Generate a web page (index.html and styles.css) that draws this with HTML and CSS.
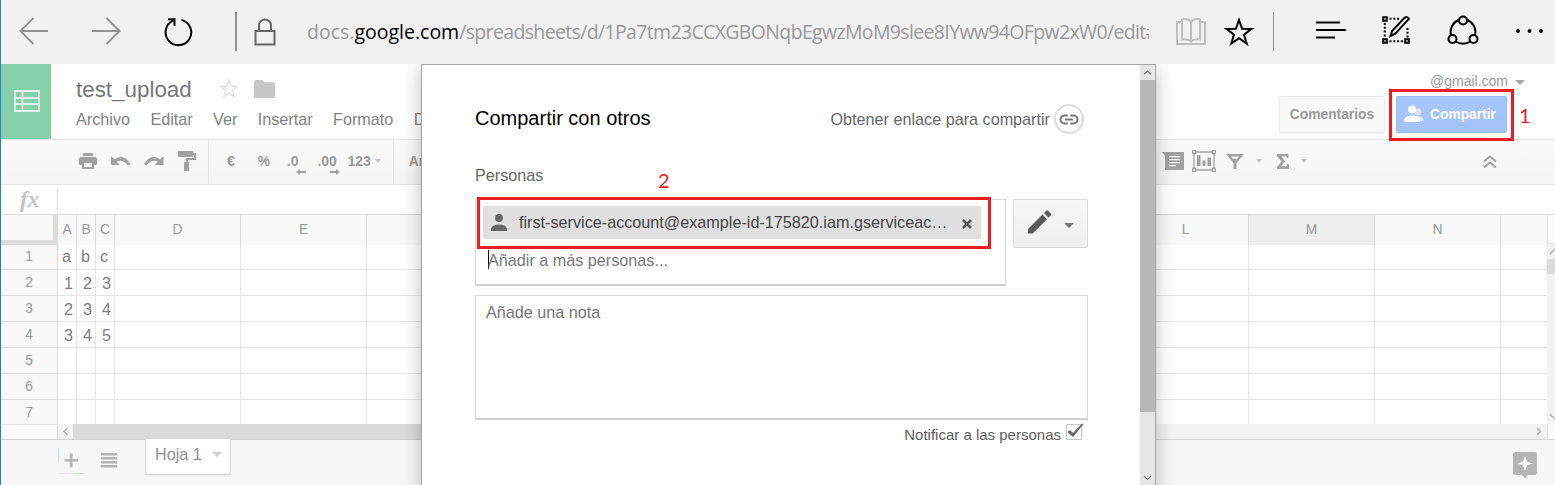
FILE: index.html
```html
<!DOCTYPE html>
<html lang="es">
<head>
<meta charset="utf-8">
<title>test_upload</title>
<link rel="stylesheet" href="styles.css">
</head>
<body>
<div class="window">
  <div class="browser-bar">
    <svg class="nav-back" width="30" height="28" viewBox="0 0 30 28"><path d="M29 14H2M14.500 1L1.500 14l13 13"/></svg>
    <svg class="nav-forward" width="30" height="28" viewBox="0 0 30 28"><path d="M1 14h27M15.500 1l13 13-13 13"/></svg>
    <svg class="nav-reload" width="30" height="30" viewBox="0 0 30 30"><path d="M17.500 2.900A12.800 12.800 0 1 1 9 3.700M4 2.300h6.500v6.500" /></svg>
    <span class="divider divider-left"></span>
    <svg class="lock" width="23" height="28" viewBox="0 0 23 28"><path d="M1.500 13h19v13.500h-19zM5 13V7.500a6 6 0 0 1 12 0V13"/></svg>
    <div class="url">docs.<b>google.com</b><span>/spreadsheets/d/1Pa7tm23CCXGBONqbEgwzMoM9slee8IYww94OFpw2xW0/edit#</span></div>
    <svg class="book" width="30" height="28" viewBox="0 0 30 28"><path d="M5 4H1v22h28V4h-4M15 4v19M15 4q-3-4-9-2.500v20q6-1 9 2q3-3 9-2v-20Q18 0 15 4"/></svg>
    <svg class="favorite" width="30" height="30" viewBox="0 0 30 30"><path d="M15 3l3.100 8.800 9.400.1-7.500 5.700 2.700 9L15 21.300l-7.700 5.300 2.700-9L2.500 11.900l9.400-.1z"/></svg>
    <span class="divider divider-right"></span>
    <svg class="hub" width="30" height="20" viewBox="0 0 30 20"><path d="M0 2.500h24M0 10h30M0 17.500h19"/></svg>
    <svg class="note" width="28" height="28" viewBox="0 0 28 28"><path d="M1.200 1.200h3.600v3.600H1.200zM1.200 23.200h3.600v3.600H1.200zM23.200 23.200h3.600v3.600h-3.600z"/><path stroke-dasharray="2 1.800" d="M7.500 2.800H18M2.800 7v15M25.500 12v10M7.500 25.300H22"/><path d="M22.500 1.800q3-1.800 4.400 1L13.500 17.500 8.500 20l1.500-5z"/></svg>
    <svg class="share-web" width="32" height="32" viewBox="0 0 32 32"><path d="M11.500 5A13 13 0 0 0 4 20M20.500 5A13 13 0 0 1 28 20M8.500 26.500q7.500 4.500 15 0"/><circle cx="16" cy="5.500" r="4"/><circle cx="5.500" cy="24" r="4"/><circle cx="26.500" cy="24" r="4"/></svg>
    <svg class="more" width="28" height="4" viewBox="0 0 28 4"><circle cx="2" cy="2" r="1.900"/><circle cx="13.500" cy="2" r="1.900"/><circle cx="25" cy="2" r="1.900"/></svg>
  </div>

  <header class="doc-header">
    <div class="sheets-logo"><svg width="26" height="22" viewBox="0 0 26 22"><path d="M1 1h24v20H1zM1 8h24M1 14h24M8.500 1v20"/></svg></div>
    <div class="doc-info">
      <div class="doc-title">test_upload
        <svg class="doc-star" width="20" height="20" viewBox="0 0 20 20"><path d="M10 1.500l2.300 6h6.200l-5 3.900 1.800 6.400L10 14.200l-5.300 3.600 1.800-6.400-5-3.900h6.200z"/></svg>
        <svg class="doc-folder" width="21" height="18" viewBox="0 0 21 18"><path d="M0 2q0-2 2-2h6l2 2.300h9.500q1.500 0 1.500 1.500V18H0z"/></svg>
      </div>
      <nav class="menu"><span>Archivo</span><span>Editar</span><span>Ver</span><span>Insertar</span><span>Formato</span><span>D</span></nav>
    </div>
    <div class="account">
      <div class="email">@gmail.com <i class="caret"></i></div>
      <div class="actions">
        <div class="btn btn-comments">Comentarios</div>
        <div class="btn btn-share"><svg width="21" height="18" viewBox="0 0 21 18"><g opacity=".55"><circle cx="14" cy="7" r="3.500"/><path d="M12 11q8 0 8 5h-8z"/></g><circle cx="8" cy="4.500" r="4"/><path d="M0 17v-2q1-4.500 8-4.500t8 4.500v2z"/></svg>Compartir</div>
      </div>
    </div>
  </header>

  <div class="toolbar">
    <svg class="t-print" width="18" height="16" viewBox="0 0 18 16"><path d="M4 0h10v3H4zM2 4h14q2 0 2 2v6h-3v4H3v-4H0V6q0-2 2-2zm3 6v4h8v-4z" fill-rule="evenodd"/></svg>
    <svg class="t-undo" width="20" height="11" viewBox="0 0 20 11"><path d="M0 0v9h9L5.700 5.700Q12 2.500 17 9.500l2.500-1.300Q13-3 3.500 3.300z"/></svg>
    <svg class="t-redo" width="20" height="11" viewBox="0 0 20 11"><path d="M19.500 0v9h-9l3.300-3.300Q7.500 2.500 2.500 9.500L0 8.200Q6.500-3 16 3.300z"/></svg>
    <svg class="t-paint" width="18" height="20" viewBox="0 0 18 20"><path d="M0 0h15v2h3v7h-8v2h1v9H6v-9h2V7h8V4h-1v2H0z"/></svg>
    <span class="t-sep"></span>
    <b class="t-euro">€</b><b class="t-percent">%</b>
    <b class="t-dec">.0<svg width="10" height="6" viewBox="0 0 10 6"><path d="M0 3l4-3v2h6v2H4v2z"/></svg></b>
    <b class="t-inc">.00<svg width="10" height="6" viewBox="0 0 10 6"><path d="M10 3L6 0v2H0v2h6v2z"/></svg></b>
    <b class="t-123">123</b><i class="caret small"></i>
    <span class="t-sep t-sep-font"></span>
    <b class="t-font">Ar</b>
    <div class="toolbar-right">
      <svg width="22" height="18" viewBox="0 0 22 18"><path d="M0 0h22v18H3V4zM7 4v1.200h11V4zM7 7v1.200h11V7zM7 10v1.200h11V10zM7 13v1.200h7V13z" fill-rule="evenodd"/></svg>
      <svg class="t-chart" width="24" height="22" viewBox="0 0 24 22"><path d="M5 5h3.500v11H5zM10.500 10.500h3V16h-3zM15.500 7.500h3.500V16h-3.500z"/><path class="line" d="M2 4v14M22 4v14M4 2h16M4 20h16M.7.700h3v3h-3zM20.300.700h3v3h-3zM.7 18.300h3v3h-3zM20.300 18.300h3v3h-3z"/></svg>
      <svg class="t-filter" width="18" height="15" viewBox="0 0 18 15"><path d="M0 0h18l-7.500 9v6h-3V9zm5 2.500 1.800 2.300h4.400L13 2.500z" fill-rule="evenodd"/></svg>
      <i class="caret small"></i>
      <svg class="t-sum" width="12" height="15" viewBox="0 0 12 15"><path d="M0 0h11.500v4H10L9 2.300H4.500L8 7.200l-4.200 5H9.500l1-2H12V15H0v-2l4.500-5.500L0 2z"/></svg>
      <i class="caret small"></i>
      <svg class="t-collapse" width="14" height="13" viewBox="0 0 14 13"><path d="M1 6.500l6-5 6 5M1 12.500l6-5 6 5"/></svg>
    </div>
  </div>

  <div class="formula"><span class="fx">fx</span><span class="formula-input"></span></div>

  <div class="sheet">
    <div class="grid">
      <div class="corner"></div><div class="ch">A</div><div class="ch">B</div><div class="ch">C</div><div class="ch">D</div><div class="ch">E</div><div class="ch"></div><div class="ch"></div><div class="ch"></div><div class="ch"></div><div class="ch"></div><div class="ch"></div><div class="ch">L</div><div class="ch selected">M</div><div class="ch">N</div><div class="ch last"></div>
      <div class="rh first">1</div><div class="text">a</div><div class="text">b</div><div class="text">c</div><div></div><div></div><div></div><div></div><div></div><div></div><div></div><div></div><div></div><div></div><div></div><div class="last"></div>
      <div class="rh">2</div><div>1</div><div>2</div><div>3</div><div></div><div></div><div></div><div></div><div></div><div></div><div></div><div></div><div></div><div></div><div></div><div class="last"></div>
      <div class="rh">3</div><div>2</div><div>3</div><div>4</div><div></div><div></div><div></div><div></div><div></div><div></div><div></div><div></div><div></div><div></div><div></div><div class="last"></div>
      <div class="rh">4</div><div>3</div><div>4</div><div>5</div><div></div><div></div><div></div><div></div><div></div><div></div><div></div><div></div><div></div><div></div><div></div><div class="last"></div>
      <div class="rh">5</div><div></div><div></div><div></div><div></div><div></div><div></div><div></div><div></div><div></div><div></div><div></div><div></div><div></div><div></div><div class="last"></div>
      <div class="rh">6</div><div></div><div></div><div></div><div></div><div></div><div></div><div></div><div></div><div></div><div></div><div></div><div></div><div></div><div></div><div class="last"></div>
      <div class="rh">7</div><div></div><div></div><div></div><div></div><div></div><div></div><div></div><div></div><div></div><div></div><div></div><div></div><div></div><div></div><div class="last"></div>
    </div>
    <div class="vscroll">
      <div class="v-head"></div>
      <svg width="8" height="15" viewBox="0 0 8 15"><path d="M3 10l5-5"/></svg>
      <div class="v-thumb"></div>
      <div class="v-space"></div>
      <svg width="8" height="15" viewBox="0 0 8 15"><path d="M3 5l5 5"/></svg>
    </div>
  </div>
  <div class="hscroll">
    <div class="h-corner"></div>
    <svg width="15" height="15" viewBox="0 0 15 15"><path d="M9.500 4L6 7.500 9.500 11"/></svg>
    <div class="h-thumb"></div>
    <div class="h-space"></div>
    <svg width="15" height="15" viewBox="0 0 15 15"><path d="M5 4l3.500 3.500L5 11"/></svg>
    <div class="h-end"></div>
  </div>

  <footer class="tabs">
    <div class="add"><svg width="27" height="27" viewBox="0 0 27 27"><path fill="#ccd8fa" d="M0 0h1v14H0z"/><path fill="#ececec" d="M1 25h14v1H1z"/><path fill="#d5e6d2" d="M15 25h12v1H15z"/><path d="M12 5.500h2.500v5.500H20v2.600h-5.500V19H12v-5.400H6.500V11H12z"/></svg></div>
    <svg class="all-sheets" width="16" height="15" viewBox="0 0 16 15"><path d="M0 0h16v2.500H0zM0 4h16v2.500H0zM0 8h16v2.500H0zM0 12h16v2.500H0z"/></svg>
    <div class="tab">Hoja 1<i class="caret"></i></div>
    <svg class="explore" width="24" height="27" viewBox="0 0 24 27"><path d="M2 0h20q2 0 2 2v19q0 2-2 2h-7l-3 3.500L9 23H2q-2 0-2-2V2q0-2 2-2zm10 4-2 5.500L4.500 11.500 10 13.500l2 5.500 2-5.500 5.500-2L14 9.500z" fill-rule="evenodd"/></svg>
  </footer>

  <section class="dialog">
    <div class="dialog-body">
      <div class="dialog-head"><h1>Compartir con otros</h1>
        <div class="get-link">Obtener enlace para compartir<span class="link-icon"><svg width="20" height="11" viewBox="0 0 20 11"><path d="M8.700 1.500H5.500a4 4 0 0 0 0 8h3.200M11.300 1.500h3.200a4 4 0 0 1 0 8h-3.200M6 5.500h8"/></svg></span></div>
      </div>
      <div class="label">Personas</div>
      <div class="people-row">
        <div class="people-box">
          <div class="chip">
            <svg class="person" width="16" height="17" viewBox="0 0 16 17"><circle cx="8" cy="4" r="3.900"/><path d="M0 17v-2.500Q1.500 10.500 8 10.500t8 4V17z"/></svg>
            <span>first-service-account@example-id-175820.iam.gserviceac…</span>
            <svg class="remove" width="10" height="10" viewBox="0 0 10 10"><path d="M1 1l8 8M9 1L1 9"/></svg>
          </div>
          <div class="placeholder"><i class="cursor"></i>Añadir a más personas...</div>
        </div>
        <div class="permission">
          <svg width="24" height="24" viewBox="0 0 24 24"><path d="M0 19L14.500 4.500l4.500 4.700L4.700 23.500H0zM16 3l2.200-2.200q1-1 2 0L22.800 3.500q1 1 0 2L20.500 7.800z"/></svg>
          <i class="caret"></i>
        </div>
      </div>
      <div class="note-box">Añade una nota</div>
      <div class="notify">Notificar a las personas<svg width="19" height="18" viewBox="0 0 19 18"><path class="box" d="M1.500 1.500h15v15h-15z"/><path class="tick" d="M2.500 9L5 7l3 3L17 .5l1.200 1L8 14z"/></svg></div>
    </div>
    <div class="dialog-scroll">
      <svg width="15" height="15" viewBox="0 0 15 15"><path d="M4 9.200L7.500 6 11 9.200"/></svg>
      <div class="dialog-thumb"></div>
      <svg class="scroll-down" width="15" height="15" viewBox="0 0 15 15"><path d="M4 6l3.500 3.500L11 6"/></svg>
    </div>
  </section>

  <div class="mark mark-share"></div><div class="mark-number number-one">1</div>
  <div class="mark mark-people"></div><div class="mark-number number-two">2</div>
</div>
</body>
</html>
```

FILE: styles.css
```css
* { box-sizing: border-box; }
body { margin: 0; font-family: "Liberation Sans", Arial, sans-serif; font-size: 16.2px; }
svg { display: block; flex: none; }
.window { position: relative; width: 1555px; height: 485px; overflow: hidden; border-left: 1px solid #1b83d8; background: #fff; display: flex; flex-direction: column; }

.browser-bar { height: 64px; flex: none; background: #f1f1f1; display: flex; align-items: center; padding-left: 18px; }
.browser-bar svg { fill: none; stroke: #000; stroke-width: 2; }
.browser-bar .nav-back, .browser-bar .nav-forward { stroke: #929292; margin-bottom: 3px; }
.nav-forward { margin-left: 42px; }
.nav-reload { margin-left: 43px; margin-bottom: 1px; }
.divider { width: 2px; height: 39px; flex: none; background: #929292; margin-bottom: 1px; }
.divider-left { margin-left: 41px; }
.browser-bar .lock { stroke: #666; margin-left: 17px; }
.url { margin-left: 30px; width: 842px; overflow: hidden; white-space: nowrap; font: 19.500px/30px "Open Sans", "Noto Sans", sans-serif; color: #999; flex: none; }
.url b { font-weight: 400; color: #000; }
.url span { letter-spacing: -.65px; }
.browser-bar .book { stroke: #bfbfbf; margin-left: 27px; }
.favorite { margin-left: 18px; }
.divider-right { width: 1px; margin-left: 19px; }
.hub { margin-left: 42px; margin-bottom: 4px; }
.note { margin-left: 36px; margin-bottom: 4px; }
.share-web { margin-left: 37px; margin-bottom: 2px; }
.browser-bar .more { fill: #000; stroke: none; margin: 0 0 2px 37px; }

.doc-header { height: 75px; flex: none; display: flex; }
.sheets-logo { width: 50px; height: 75px; background: #87ceab; padding: 26px 0 0 13px; }
.sheets-logo svg { fill: none; stroke: #dff3e8; stroke-width: 1.800; }
.doc-info { padding: 13px 0 0 25px; width: 371px; flex: none; overflow: hidden; }
.doc-title { font-size: 22.400px; line-height: 26px; color: #777; display: flex; align-items: center; height: 26px; }
.doc-star { margin: 0 0 3px 27px; fill: none; stroke: #dcdcdc; stroke-width: 1.200; }
.doc-folder { margin: 0 0 2px 15px; fill: #c6c6c6; }
.menu { display: flex; gap: 20.400px; line-height: 20px; margin-top: 6px; color: #818181; }
.account { margin-left: auto; width: 276px; flex: none; }
.email { margin: 9px 0 0 151px; height: 17px; font-size: 14px; line-height: 17px; color: #999; display: flex; align-items: center; }
.caret { width: 0; height: 0; border: 5px solid transparent; border-top-color: #aaa; border-bottom: 0; }
.caret.small { border-width: 4px 3.500px 0; border-top-color: #c5c5c5; }
.email .caret { margin-left: 7px; margin-top: 2px; }
.actions { display: flex; gap: 11px; margin-top: 6px; }
.btn { height: 37px; border: 1px solid #e9e9e9; border-radius: 2px; background: #f9f9f9; font-size: 13.800px; font-weight: 700; color: #999; display: flex; align-items: center; justify-content: center; width: 106px; padding-bottom: 1px; }
.btn-share { width: 111px; color: #fff; background: linear-gradient(#a6c6fd, #a3c2f6); border-color: #97bbf8; padding-right: 3px; }
.btn-share svg { fill: #fff; margin-right: 5px; }

.toolbar { height: 46px; flex: none; border-top: 1px solid #e5e5e5; border-bottom: 1px solid #e5e5e5; background: linear-gradient(#fafafa, #f5f5f5); display: flex; align-items: center; padding: 0 0 2px 78px; color: #999; font-size: 13.800px; }
.toolbar svg { fill: #a1a1a1; }
.t-undo { margin-left: 14px; }
.t-redo { margin-left: 13px; }
.t-paint { margin-left: 14px; }
.t-sep { width: 1px; height: 44px; flex: none; background: #e7e7e7; margin: 0 0 -2px 12px; }
.t-euro { margin-left: 18px; }
.t-percent { margin-left: 23px; }
.t-dec, .t-inc { display: flex; }
.t-dec { margin-left: 17px; }
.t-inc { margin-left: 11px; }
.t-dec svg { margin: 15px 0 -6px -2px; }
.t-inc svg { margin: 15px 0 -6px -7px; }
.t-123 { margin-left: 8px; }
.toolbar > .caret { margin-left: 4px; }
.t-sep-font { margin-left: 12px; }
.t-font { margin-left: 15px; }
.toolbar-right { margin-left: auto; width: 393px; display: flex; align-items: center; }
.t-chart { margin-left: 8px; }
.toolbar .t-chart .line, .toolbar .t-collapse { fill: none; stroke: #a1a1a1; stroke-width: 1.300; }
.t-filter { margin-left: 10px; }
.toolbar-right .caret { margin-left: 12px; }
.t-sum { margin-left: 15px; }
.toolbar .t-collapse { margin-left: 176px; stroke-width: 2; }

.formula { height: 29px; flex: none; display: flex; align-items: center; }
.fx { width: 56px; padding-left: 19px; font: italic 700 23px/24px "Liberation Serif", serif; color: #c4c4c4; }
.formula-input { border-left: 1px solid #dedede; height: 21px; }

.sheet { height: 210px; flex: none; display: flex; border-top: 1px solid #d9d9d9; overflow: hidden; }
.grid { width: 1546px; flex: none; display: grid; grid-template-columns: 57px repeat(3, 19px) repeat(11, 126px) 46px; grid-template-rows: 30px 25px repeat(6, 26px); overflow: hidden; }
.grid > div { border-right: 1px solid #e6e6e6; border-bottom: 1px solid #e6e6e6; color: #7d7d7d; display: flex; align-items: center; justify-content: flex-end; padding: 2px 3px 0 0; }
.grid > .text { justify-content: flex-start; padding: 0 0 1px 4px; }
.grid > .ch { background: #f9f9f9; justify-content: center; padding: 0 0 2px; border-bottom: 0; border-color: #dadada; color: #999; font-size: 13.800px; }
.grid > .selected { background: #eee; }
.grid > .last { border-right: 0; }
.grid > .corner { background: #f9f9f9; border-right: 5px solid #dcdcdc; border-bottom: 5px solid #dcdcdc; }
.grid > .rh { background: #f9f9f9; justify-content: center; padding: 0; color: #999; font-size: 13.800px; border-color: #dadada; }
.grid > .first { padding-bottom: 2px; }
.vscroll { width: 8px; background: #f2f2f2; display: flex; flex-direction: column; }
.vscroll svg, .hscroll svg { fill: none; stroke: #aaa; stroke-width: 1.200; }
.v-head { height: 29px; background: #fbfbfb; border-left: 1px solid #e4e4e4; border-bottom: 1px solid #e4e4e4; }
.v-thumb { height: 15px; background: #dbdbdb; }
.v-space { flex: 1; }

.hscroll { height: 15px; flex: none; display: flex; background: #f2f2f2; }
.h-corner { width: 57px; background: #fcfcfc; border-right: 1px solid #e0e0e0; border-top: 1px solid #e5e5e5; }
.h-thumb { width: 600px; background: #dbdbdb; }
.h-space { flex: 1; }
.h-end { width: 8px; background: #fbfbfb; border-left: 1px solid #e2e2e2; }

.tabs { flex: 1; display: flex; background: #f7f7f7; border-top: 1px solid #d4d4d4; }
.add { margin: 8px 0 0 57px; }
.add svg, .all-sheets { fill: #b3b3b3; }
.all-sheets { margin: 13px 0 0 16px; }
.tab { width: 86px; height: 36px; margin: -1px 0 0 28px; border: 1px solid #d6d6d6; border-top: 0; border-radius: 0 0 3px 3px; background: #fff; box-shadow: 0 1px 1px #e2e2e2; color: #8f8f8f; display: flex; align-items: flex-start; padding-left: 9px; line-height: 31px; }
.tab .caret { margin: 13px 0 0 10px; border-top-color: #d0d0d0; }
.explore { margin: 12px 18px 0 auto; fill: #b5b5b5; }

/* Share dialog floating over the spreadsheet */
.dialog { position: absolute; left: 420px; top: 64px; width: 735px; height: 440px; border: 1px solid #a5a5a5; background: #fff; box-shadow: 0 4px 18px rgba(0,0,0,.26); clip-path: inset(0 -30px 0 -30px); display: flex; color: #666; }
.dialog-body { width: 718px; padding: 39px 52px 0 53px; flex: none; }
.dialog-head { display: flex; justify-content: space-between; height: 30px; padding-right: 4px; }
.dialog h1 { margin: 3px 0 0; font-size: 20px; line-height: 23px; font-weight: 400; color: #000; }
.get-link { display: flex; align-items: center; white-space: nowrap; }
.link-icon { width: 30px; height: 30px; border: 2px solid #ddd; border-radius: 50%; margin-left: 4px; display: flex; align-items: center; justify-content: center; }
.link-icon svg { fill: none; stroke: #777; stroke-width: 2; }
.label { margin-top: 31px; line-height: 20px; }
.people-row { display: flex; gap: 7px; margin-top: 14px; }
.people-box { width: 531px; height: 87px; border: 1px solid #d9d9d9; border-bottom-width: 2px; border-bottom-color: #cfcfcf; padding: 6px 7px; }
.chip { height: 33px; width: 498px; background: #e0e0e0; border-radius: 2px; display: flex; align-items: center; color: #444; padding-left: 8px; }
.person { fill: #666; }
.chip span { margin-left: 12px; width: 430px; white-space: nowrap; }
.remove { margin-left: 13px; margin-top: 2px; fill: none; stroke: #555; stroke-width: 2.500; }
.placeholder { margin-top: 11px; line-height: 20px; padding-left: 5px; color: #777; display: flex; }
.cursor { width: 1px; height: 19px; margin-right: -1px; background: #000; }
.permission { width: 75px; height: 49px; border: 1px solid #dadada; border-radius: 2px; background: linear-gradient(#f7f7f7, #efefef); display: flex; align-items: center; padding-left: 14px; }
.permission svg { fill: #5a5a5a; margin-bottom: 3px; }
.permission .caret { margin-left: 12px; margin-top: 4px; border-top-color: #777; }
.note-box { margin-top: 9px; height: 125px; border: 1px solid #d9d9d9; border-bottom: 2px solid #cfcfcf; padding: 6px 10px; line-height: 20px; color: #757575; }
.notify { display: flex; justify-content: flex-end; font-size: 15px; line-height: 20px; margin-top: 5px; padding-right: 4px; color: #5c5c5c; }
.notify svg { margin: -2px 0 0 4px; }
.box { fill: #fff; stroke: #c6c6c6; }
.tick { fill: #666; }
.dialog-scroll { width: 15px; background: #e6e6e6; display: flex; flex-direction: column; }
.dialog-scroll svg { fill: none; stroke: #777; stroke-width: 1.200; }
.dialog-thumb { height: 332px; background: #b8b8b8; }
.dialog-scroll .scroll-down { margin-top: 58px; }

/* Numbered step markers */
.mark { position: absolute; border: 3px solid #ed1c24; }
.mark-share { left: 1388px; top: 89px; width: 125px; height: 52px; }
.mark-people { left: 476px; top: 197px; width: 514px; height: 52px; }
.mark-number { position: absolute; color: #ed1c24; font: 20px/24px Lato, "Open Sans", sans-serif; }
.number-one { left: 1518px; top: 103px; }
.number-two { left: 657px; top: 168px; }
```
